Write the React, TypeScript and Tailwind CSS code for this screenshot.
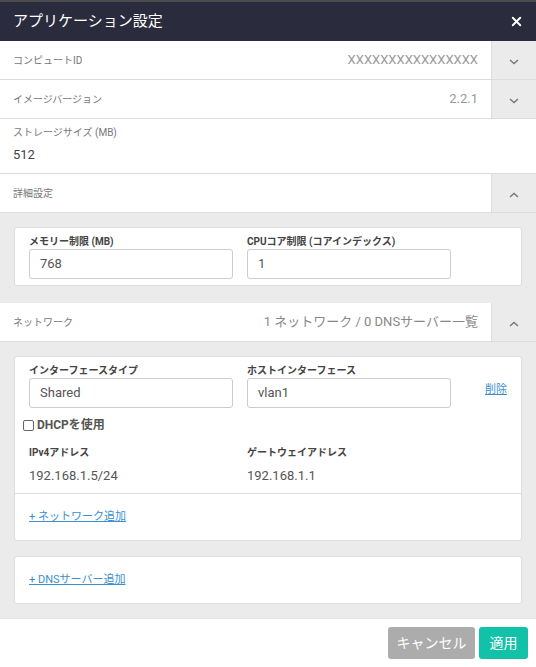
import { X } from 'lucide-react'

const FONT = { fontFamily: 'Roboto, "Noto Sans CJK JP", sans-serif' }

function Chevron({ up }: { up?: boolean }) {
  return (
    <svg width="10" height="6" viewBox="0 0 10 6" className="text-[#777]">
      <polyline
        points={up ? '1,5 5,1.5 9,5' : '1,1 5,4.5 9,1'}
        fill="none"
        stroke="currentColor"
        strokeWidth="1.4"
      />
    </svg>
  )
}

function ToggleRow({ label, value, up, valueClass }: { label: string; value?: string; up?: boolean; valueClass?: string }) {
  return (
    <div className="flex h-[39px] shrink-0 border-b border-[#dcdcdc] bg-white">
      <div className="flex flex-1 items-center justify-between pl-[13px] pr-[13px]">
        <span className="text-[10px] text-[#777]">{label}</span>
        {value && <span className={valueClass ?? 'text-[13px] text-[#999]'}>{value}</span>}
      </div>
      <div className="flex w-[45px] items-center justify-center border-l border-[#dcdcdc] bg-[#ebebeb] pt-[4px]">
        <Chevron up={up} />
      </div>
    </div>
  )
}

function Field({ label, value }: { label: string; value: string }) {
  return (
    <div className="w-[204px]">
      <div className="mb-[1px] text-[10px] font-bold leading-[13px] text-[#444]">{label}</div>
      <div className="flex h-[30px] items-center rounded-[3px] border border-[#ccc] px-[10px] text-[13px] text-[#555]">
        {value}
      </div>
    </div>
  )
}

export default function App() {
  return (
    <div style={FONT} className="flex h-[667px] w-[536px] flex-col overflow-hidden bg-white">
      <div className="h-[2px] shrink-0 bg-[#4b4b4b]" />
      <div className="flex h-[39px] shrink-0 items-center justify-between bg-[#2a2b3d] px-[13px]">
        <span className="text-[15px] text-white">アプリケーション設定</span>
        <X size={15} strokeWidth={3} className="mr-[-1px] text-white" />
      </div>

      <ToggleRow label="コンピュートID" value="XXXXXXXXXXXXXXXX" />
      <ToggleRow label="イメージバージョン" value="2.2.1" />

      <div className="h-[55px] shrink-0 border-b border-[#dcdcdc] px-[13px] pt-[7px]">
        <div className="text-[10px] leading-[14px] text-[#777]">ストレージサイズ (MB)</div>
        <div className="mt-[7px] text-[13px] leading-[16px] text-[#444]">512</div>
      </div>

      <ToggleRow label="詳細設定" up />

      <div className="shrink-0 bg-[#ebebeb] px-[14px] pt-[14px] pb-[17px]">
        <div className="flex h-[59px] gap-[14px] rounded-[3px] border border-[#ddd] bg-white px-[14px] pt-[7px]">
          <Field label="メモリー制限 (MB)" value="768" />
          <Field label="CPUコア制限 (コアインデックス)" value="1" />
        </div>
      </div>

      <ToggleRow
        label="ネットワーク"
        value="1 ネットワーク / 0 DNSサーバー一覧"
        up
        valueClass="text-[13px] text-[#888]"
      />

      <div className="flex min-h-0 flex-1 flex-col gap-[15px] overflow-hidden bg-[#ebebeb] px-[14px] pt-[14px]">
        <div className="shrink-0 rounded-[3px] border border-[#ddd] bg-white">
          <div className="px-[14px] pt-[7px] pb-[9px]">
            <div className="flex gap-[14px]">
              <Field label="インターフェースタイプ" value="Shared" />
              <Field label="ホストインターフェース" value="vlan1" />
              <a className="mt-[18px] ml-[20px] text-[11px] text-[#3a8fd0] underline">削除</a>
            </div>
            <label className="mt-[8px] ml-[-6px] flex h-[18px] items-center gap-[3px] text-[12px] font-bold text-[#555]">
              <span className="h-[11px] w-[11px] rounded-[2px] border border-[#666] bg-white" />
              DHCPを使用
            </label>
            <div className="mt-[12px] flex gap-[14px]">
              <div className="w-[204px]">
                <div className="text-[10px] font-bold leading-[13px] text-[#444]">IPv4アドレス</div>
                <div className="mt-[9px] text-[13px] leading-[16px] text-[#555]">192.168.1.5/24</div>
              </div>
              <div className="w-[204px]">
                <div className="text-[10px] font-bold leading-[13px] text-[#444]">ゲートウェイアドレス</div>
                <div className="mt-[9px] text-[13px] leading-[16px] text-[#555]">192.168.1.1</div>
              </div>
            </div>
          </div>
          <div className="flex h-[47px] items-center border-t border-[#ddd] px-[14px]">
            <a className="text-[11px] text-[#3a8fd0] underline">+ ネットワーク追加</a>
          </div>
        </div>

        <div className="flex h-[48px] shrink-0 items-center rounded-[3px] border border-[#ddd] bg-white px-[14px]">
          <a className="text-[11px] text-[#3a8fd0] underline">+ DNSサーバー追加</a>
        </div>
      </div>

      <div className="flex h-[49px] shrink-0 items-center justify-end gap-[4px] border-t border-[#e4e4e4] pr-[8px]">
        <button className="h-[32px] w-[87px] rounded-[3px] bg-[#acacac] text-[14px] text-white">キャンセル</button>
        <button className="h-[32px] w-[49px] rounded-[3px] bg-[#12c2a8] text-[14px] text-white">適用</button>
      </div>
    </div>
  )
}
